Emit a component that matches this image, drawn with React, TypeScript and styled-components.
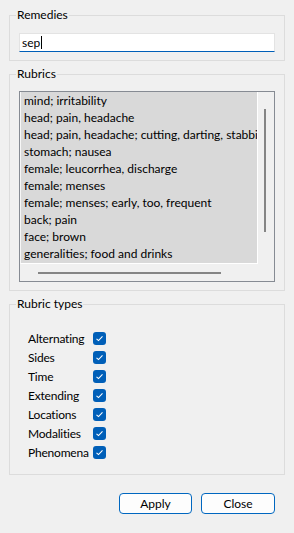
import React from "react"
import styled, { createGlobalStyle } from "styled-components"

const GlobalStyle = createGlobalStyle`
  html, body {
    margin: 0;
    padding: 0;
    background: #f0f0f0;
  }
  body {
    font-family: Lato, "Noto Sans", sans-serif;
    font-size: 12px;
    color: #000;
  }
`

const Dialog = styled.div`
  box-sizing: border-box;
  width: 294px;
  min-height: 533px;
  padding: 7px 9px 0 9px;
  display: flex;
  flex-direction: column;
  gap: 5px;
`

const Group = styled.fieldset`
  margin: 0;
  padding: 0 9px ${p => p.$bottom}px 9px;
  border: 1px solid #dcdcdc;
  min-width: 0;
`

const Legend = styled.legend`
  padding: 0 1px;
  margin-left: -3px;
  line-height: 16px;
  font-size: 12px;
  color: #000;
`

const TextField = styled.div`
  margin-top: 10px;
  box-sizing: border-box;
  height: 19px;
  background: #fff;
  border: 1px solid #e3e3e3;
  border-bottom-color: #005fb8;
  padding: 0 2px;
  display: flex;
  align-items: center;
  line-height: 17px;
`

const Caret = styled.span`
  display: inline-block;
  width: 1px;
  height: 13px;
  background: #000;
  margin-left: 1px;
`

const ListBox = styled.div`
  margin-top: 9px;
  box-sizing: border-box;
  height: 191px;
  border: 1px solid #868b93;
  background: #f0f0f0;
  display: grid;
  grid-template-columns: 238px 1fr;
  grid-template-rows: 172px 1fr;
`

const Items = styled.div`
  grid-column: 1;
  grid-row: 1;
  border: 1px solid #fff;
  border-top: none;
  border-left-color: #f7f7f7;
  background: #d9d9d9;
  overflow: hidden;
`

const Item = styled.div`
  height: 17px;
  line-height: 17px;
  padding-left: 3px;
  white-space: nowrap;
`

const VTrack = styled.div`
  grid-column: 2;
  grid-row: 1 / span 2;
  padding: 17px 0 0 6px;
`

const VThumb = styled.div`
  width: 2px;
  height: 123px;
  background: #858585;
`

const HTrack = styled.div`
  grid-column: 1;
  grid-row: 2;
  padding: 8px 0 0 18px;
`

const HThumb = styled.div`
  width: 183px;
  height: 2px;
  background: #858585;
`

const Checks = styled.div`
  margin: 17px 0 0 9px;
  display: grid;
  grid-template-columns: minmax(62px, max-content) 13px;
  column-gap: 3px;
  grid-auto-rows: 19px;
  align-items: center;
`

const CheckLabel = styled.span`
  line-height: 19px;
  white-space: nowrap;
  letter-spacing: -0.2px;
`

const Box = styled.span`
  width: 13px;
  height: 13px;
  border-radius: 3px;
  background: #005fb8;
  display: flex;
  align-items: center;
  justify-content: center;
`

const Buttons = styled.div`
  margin-top: 13px;
  padding-right: 10px;
  display: flex;
  justify-content: flex-end;
  gap: 9px;
`

const Button = styled.button`
  box-sizing: border-box;
  width: ${p => p.$w}px;
  height: 21px;
  border: 1px solid #0067c0;
  border-radius: 4px;
  background: #fdfdfd;
  font-family: inherit;
  font-size: 12px;
  color: #000;
  padding: 0;
  line-height: 19px;
`

const rubrics = [
  "mind; irritability",
  "head; pain, headache",
  "head; pain, headache; cutting, darting, stabbing",
  "stomach; nausea",
  "female; leucorrhea, discharge",
  "female; menses",
  "female; menses; early, too, frequent",
  "back; pain",
  "face; brown",
  "generalities; food and drinks",
]

const types = ["Alternating", "Sides", "Time", "Extending", "Locations", "Modalities", "Phenomena"]

const Check = () => (
  <Box>
    <svg width="9" height="9" viewBox="0 0 9 9">
      <path d="M1.5 4.8 L3.5 6.6 L7.5 2.4" fill="none" stroke="#fff" strokeWidth="1.1" />
    </svg>
  </Box>
)

export default function App() {
  return (
    <>
      <GlobalStyle />
      <Dialog>
        <Group $bottom={8}>
          <Legend>Remedies</Legend>
          <TextField>
            sep<Caret />
          </TextField>
        </Group>

        <Group $bottom={8}>
          <Legend>Rubrics</Legend>
          <ListBox>
            <Items>
              {rubrics.map(r => (
                <Item key={r}>{r}</Item>
              ))}
            </Items>
            <VTrack>
              <VThumb />
            </VTrack>
            <HTrack>
              <HThumb />
            </HTrack>
          </ListBox>
        </Group>

        <Group $bottom={12}>
          <Legend>Rubric types</Legend>
          <Checks>
            {types.map(t => (
              <React.Fragment key={t}>
                <CheckLabel>{t}</CheckLabel>
                <Check />
              </React.Fragment>
            ))}
          </Checks>
        </Group>

        <Buttons>
          <Button $w={73}>Apply</Button>
          <Button $w={74}>Close</Button>
        </Buttons>
      </Dialog>
    </>
  )
}
